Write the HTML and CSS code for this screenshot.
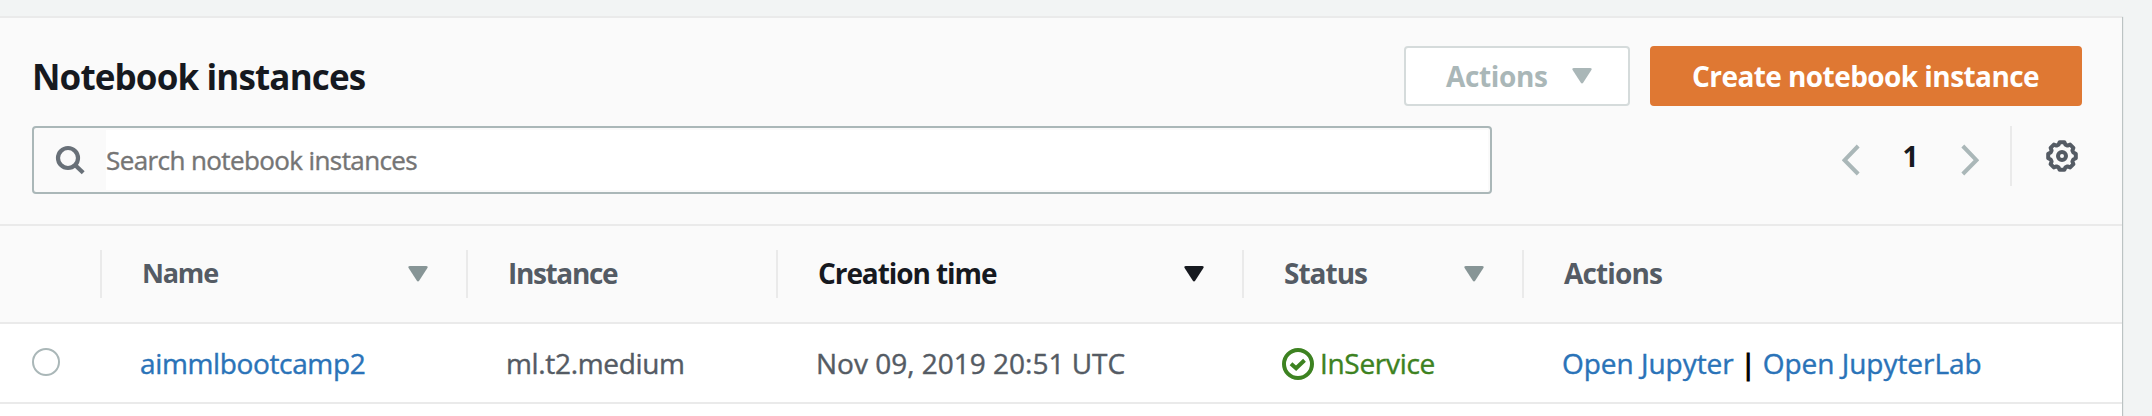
FILE: index.html
```html
<!DOCTYPE html>
<html lang="en">
<head>
<meta charset="utf-8">
<title>Notebook instances</title>
<link rel="stylesheet" href="styles.css">
</head>
<body>
<main class="panel">
  <header class="panel-header">
    <div class="title-row">
      <h1 class="title">Notebook instances</h1>
      <div class="buttons">
        <button class="btn btn-disabled" disabled><span class="btn-label">Actions</span>
          <svg class="caret" viewBox="0 0 20 16"><path d="M2 0h16q2.400 0 1.400 2L11.300 14.600q-1.300 2-2.600 0L.6 2Q-.4 0 2 0z"/></svg>
        </button>
        <button class="btn btn-primary">Create notebook instance</button>
      </div>
    </div>
    <div class="filter-row">
      <label class="search">
        <span class="search-icon"><svg width="32" height="32" viewBox="0 0 32 32"><circle cx="14" cy="14" r="10" /><path d="M20.500 20.500l8.700 8.300"/></svg></span>
        <input class="search-input" type="text" placeholder="Search notebook instances">
      </label>
      <nav class="pager">
        <svg class="chevron" viewBox="0 0 18 32"><path d="M16.200 2L2.600 16.200 16.200 30"/></svg>
        <span class="page">1</span>
        <svg class="chevron" viewBox="0 0 18 32"><path d="M1.800 2L15.400 16.200 1.800 30"/></svg>
        <span class="settings">
          <svg class="gear" viewBox="-16 -16 32 32"><path d="M-2.300-13.800L2.300-13.800 3.450-11.300 5.540-10.400 8.130-11.400 11.400-8.130 10.400-5.540 11.300-3.450 13.800-2.300 13.800 2.300 11.300 3.450 10.400 5.540 11.400 8.130 8.130 11.400 5.540 10.400 3.450 11.300 2.300 13.800-2.300 13.800-3.450 11.300-5.540 10.400-8.130 11.400-11.400 8.130-10.400 5.540-11.300 3.450-13.800 2.300-13.800-2.300-11.300-3.450-10.400-5.540-11.400-8.130-8.130-11.400-5.540-10.400-3.450-11.300z"/><circle r="4"/></svg>
        </span>
      </nav>
    </div>
  </header>
  <div class="row head-row">
    <div class="th th-select"></div>
    <div class="th"><span class="t-name">Name</span><svg class="caret" viewBox="0 0 20 16"><path d="M2 0h16q2.400 0 1.400 2L11.300 14.600q-1.300 2-2.600 0L.6 2Q-.4 0 2 0z"/></svg></div>
    <div class="th"><span class="t-instance">Instance</span></div>
    <div class="th th-sorted"><span class="t-creation">Creation time</span><svg class="caret" viewBox="0 0 20 16"><path d="M2 0h16q2.400 0 1.400 2L11.300 14.600q-1.300 2-2.600 0L.6 2Q-.4 0 2 0z"/></svg></div>
    <div class="th"><span class="t-status">Status</span><svg class="caret" viewBox="0 0 20 16"><path d="M2 0h16q2.400 0 1.400 2L11.300 14.600q-1.300 2-2.600 0L.6 2Q-.4 0 2 0z"/></svg></div>
    <div class="th"><span class="t-actions">Actions</span></div>
  </div>
  <div class="row body-row">
    <div class="td-select"><span class="radio"></span></div>
    <div class="td"><a class="link d-name">aimmlbootcamp2</a></div>
    <div class="td d-instance">ml.t2.medium</div>
    <div class="td">Nov 09, 2019 20:51 UTC</div>
    <div class="td td-status"><svg class="check" viewBox="0 0 32 32"><circle cx="16" cy="16" r="14"/><path d="M9 15.800l5.100 4.500 8.400-8"/></svg><span class="d-status">InService</span></div>
    <div class="td td-actions"><a class="link">Open Jupyter</a><span class="bar">|</span><a class="link">Open JupyterLab</a></div>
  </div>
</main>
</body>
</html>
```
FILE: styles.css
```css
* { box-sizing: border-box; }
body {
  margin: 0;
  padding-top: 16px;
  height: 416px;
  overflow: hidden;
  background: #f2f4f4;
  color: #545b64;
  font: 28px/40px "Open Sans", "Noto Sans", sans-serif;
}
svg { display: block; flex: none; }
.panel {
  width: 2122px;
  height: 420px;
  background: #fff;
  border-top: 2px solid #eaeaea;
  box-shadow: 1px 1px 1px #bcc3c3;
}
.panel-header {
  height: 208px;
  padding: 28px 40px 0 32px;
  background: #fafafa;
  border-bottom: 2px solid #eaeaea;
}
.title-row, .filter-row { display: flex; justify-content: space-between; }
.title-row { height: 60px; align-items: center; }
.title {
  margin: 2px 0 0;
  color: #16191f;
  font-size: 35px;
  line-height: 60px;
  letter-spacing: -.86px;
}
.buttons { display: flex; gap: 20px; }
.btn {
  display: flex;
  align-items: center;
  height: 60px;
  padding: 0 40px 1px;
  border: 2px solid;
  border-radius: 4px;
  font: bold 28px/40px "Open Sans", "Noto Sans", sans-serif;
  letter-spacing: -.57px;
}
.btn-disabled {
  width: 226px;
  justify-content: space-between;
  padding-right: 36px;
  background: #fff;
  border-color: #d5dbdb;
  color: #aab7b8;
}
.btn-label { letter-spacing: -.36px; }
.btn-primary {
  width: 432px;
  background: #df7833;
  border-color: #df7833;
  color: #fff;
}
.caret { width: 20px; height: 16px; fill: currentColor; }
.filter-row { margin-top: 20px; }
.search {
  display: flex;
  width: 1460px;
  height: 68px;
  padding: 2px;
  border: 2px solid #aab7b8;
  border-radius: 4px;
  background: #fafafa;
}
.search-icon { width: 70px; padding: 14px 0 0 18px; }
.search-icon svg { fill: none; stroke: #687078; stroke-width: 4.200; }
.search-input {
  flex: 1;
  min-width: 0;
  padding: 0;
  border: 0;
  background: #fff;
  font: 26px/40px "Open Sans", "Noto Sans", sans-serif;
  letter-spacing: -.6px;
}
.search-input::placeholder { color: #757575; opacity: 1; -webkit-text-stroke: .4px; }
.pager { display: flex; align-items: center; height: 60px; }
.chevron {
  width: 18px;
  height: 32px;
  margin-top: 7px;
  fill: none;
  stroke: #aab7b8;
  stroke-width: 4;
}
.page {
  width: 101px;
  padding-bottom: 1px;
  color: #16191f;
  font-weight: bold;
  text-align: center;
}
.settings {
  display: flex;
  align-items: center;
  height: 60px;
  margin-left: 31px;
  padding: 0 4px 0 34px;
  border-left: 2px solid #eaeaea;
}
.gear { width: 32px; height: 32px; fill: none; stroke: #545b64; stroke-width: 4; stroke-linejoin: round; }
.row { display: grid; grid-template-columns: 100px 366px 310px 466px 280px 1fr; align-items: center; }
.head-row { height: 98px; background: #fafafa; border-bottom: 2px solid #eaeaea; }
.th {
  display: flex;
  align-items: center;
  justify-content: space-between;
  height: 48px;
  padding: 0 38px 0 40px;
  border-left: 2px solid #eaeaea;
  font-weight: bold;
}
.th span { margin-top: -2px; }
.th .caret { color: #879596; }
.th-select { border-left: 0; }
.th-sorted, .th-sorted .caret { color: #16191f; }
.t-name { font-size: 27px; letter-spacing: -1.200px; }
.t-instance { letter-spacing: -1.350px; }
.t-creation { letter-spacing: -1.080px; }
.t-status { letter-spacing: -1px; }
.t-actions { letter-spacing: -.86px; }
.body-row { height: 80px; border-bottom: 2px solid #eaeaea; -webkit-text-stroke: .4px; }
.td { padding-left: 40px; white-space: nowrap; }
.td-select { padding: 0 0 2px 32px; }
.radio { display: block; width: 28px; height: 28px; border: 2px solid #aab7b8; border-radius: 50%; background: #fff; }
.link { color: #2a73b8; text-decoration: none; }
.d-name { letter-spacing: -.36px; }
.d-instance { letter-spacing: -.33px; }
.td-status { display: flex; align-items: center; gap: 6px; color: #3d8221; }
.check { width: 32px; height: 32px; margin-top: 2px; fill: none; stroke: #3d8221; stroke-width: 4; }
.d-status { letter-spacing: -.31px; }
.td-actions { display: flex; align-items: center; letter-spacing: -.03px; }
.bar { width: 29px; color: #000; text-align: center; -webkit-text-stroke: 1.200px; }
```
